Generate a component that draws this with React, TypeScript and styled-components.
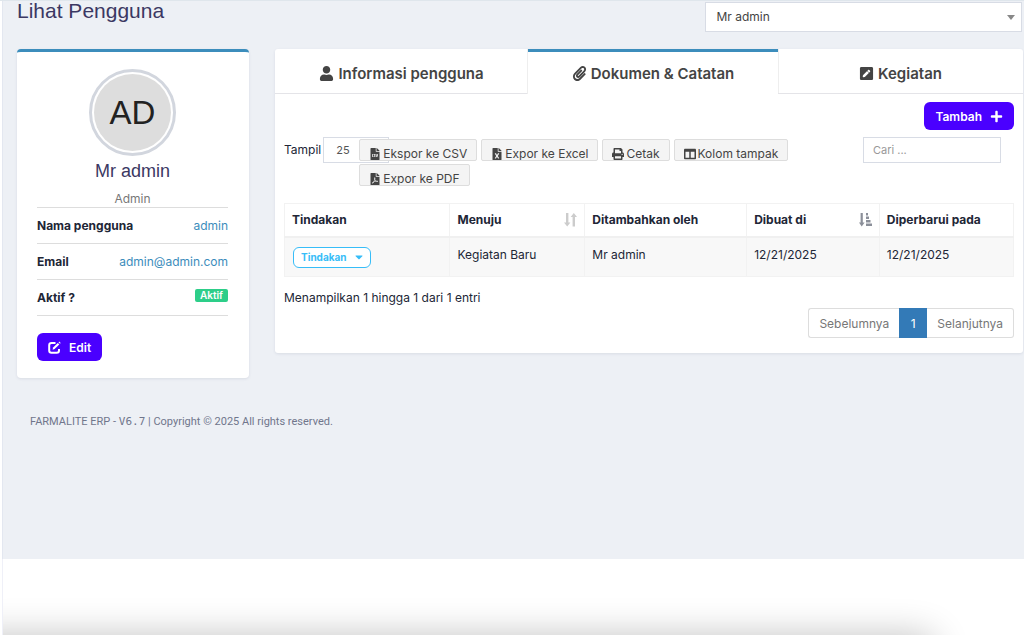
import React from "react";
import styled, { createGlobalStyle, css } from "styled-components";
import {
  FaUser,
  FaPaperclip,
  FaPenSquare,
  FaFileCsv,
  FaFileExcel,
  FaFilePdf,
  FaPrint,
  FaColumns,
  FaPlus,
  FaCaretDown,
} from "react-icons/fa";

const sans = `Inter, "Noto Sans", sans-serif`;
const heading = `"Liberation Sans", Arial, sans-serif`;

const GlobalStyle = createGlobalStyle`
  *, *::before, *::after { box-sizing: border-box; }
  body {
    margin: 0;
    background: #fff;
    color: #212636;
    font-family: ${sans};
    font-size: 12px;
    line-height: 18px;
  }
  button, input, select { font-family: inherit; }
`;

const Page = styled.div`
  display: flex;
  flex-direction: column;
  min-height: 100vh;
  padding-left: 2px;
  border-top: 1px solid #dfe6ec;
`;

const Content = styled.div`
  flex: 1;
  padding: 0 1px 0 13px;
  background: #edf0f5;
  border-left: 1px solid #e3e7f0;
`;

const Header = styled.header`
  display: flex;
  justify-content: space-between;
  align-items: flex-start;
  padding: 0 1px;
`;

const Title = styled.h1`
  margin: 0;
  color: #3b3863;
  font: 400 21px/20px ${heading};
`;

const UserPicker = styled.div`
  position: relative;
  width: 31.5%;
  margin-top: 1px;
`;

const UserSelect = styled.select`
  display: block;
  width: 100%;
  height: 30px;
  padding: 0 10px 2px;
  border: 1px solid #d8dce5;
  border-radius: 0;
  background: #fff;
  color: #444;
  font-size: 12px;
  appearance: none;
`;

const PickerArrow = styled.span`
  position: absolute;
  top: 13px;
  right: 7px;
  border: 4px solid transparent;
  border-top: 5px solid #888;
  border-bottom: 0;
  pointer-events: none;
`;

const Columns = styled.div`
  display: grid;
  grid-template-columns: minmax(0, 232fr) minmax(0, 748fr);
  gap: 26px;
  align-items: start;
  margin-top: 17px;
  padding-left: 1px;
`;

const ProfileCard = styled.section`
  padding: 17px 21px 17px 20px;
  border-top: 3px solid #3c8dbc;
  border-radius: 4px;
  background: #fff;
  box-shadow: 0 1px 3px rgba(40, 50, 90, 0.1);
  text-align: center;
`;

const Avatar = styled.div`
  width: 87px;
  height: 87px;
  margin: 0 auto;
  padding: 2px;
  border: 3px solid #d2d6de;
  border-radius: 50%;
  color: #222;
  font: 400 33px/77px ${heading};
`;

const AvatarInner = styled.span`
  display: block;
  border-radius: 50%;
  background: #ddd;
`;

const ProfileName = styled.h2`
  margin: 4px 0 0;
  color: #3b3863;
  font: 400 18px/22px ${heading};
`;

const ProfileRole = styled.p`
  margin: 8px 0 0;
  color: #777;
  line-height: 17px;
`;

const Facts = styled.dl`
  margin: 0;
  border-top: 1px solid #ddd;
`;

const Fact = styled.div`
  display: flex;
  justify-content: space-between;
  height: 36px;
  padding-top: 9px;
  border-bottom: 1px solid #ddd;
`;

const FactName = styled.dt`
  font-weight: 700;
`;

const FactValue = styled.dd`
  margin: 0;
`;

const FactLink = styled.a`
  color: #3c8dbc;
  text-decoration: none;
`;

const Badge = styled.span`
  display: block;
  padding: 0 5px;
  border-radius: 2px;
  background: #2dce89;
  color: #fff;
  font-size: 10px;
  font-weight: 600;
  line-height: 13px;
`;

const PrimaryButton = styled.button`
  display: flex;
  align-items: center;
  gap: 8px;
  height: 28px;
  padding: 0 11px;
  border: 0;
  border-radius: 6px;
  background: #4a00ff;
  color: #fff;
  font-size: 12px;
  font-weight: 600;
`;

const ProfileActions = styled.div`
  display: flex;
  padding-top: 17px;
`;

const Panel = styled.section`
  border-radius: 3px;
  background: #fff;
  box-shadow: 0 1px 3px rgba(40, 50, 90, 0.1);
`;

const Tabs = styled.div`
  display: grid;
  grid-template-columns: 253fr 250fr 245fr;
`;

const Tab = styled.button<{ $active?: boolean }>`
  display: flex;
  align-items: center;
  justify-content: center;
  gap: 4px;
  height: 45px;
  padding: 2px 0 0;
  border: 0;
  border-top: 3px solid transparent;
  border-bottom: 1px solid #e4e4e8;
  background: none;
  color: #444;
  font-size: 15px;
  font-weight: 600;
  ${(p) =>
    p.$active &&
    css`
      border-top-color: #3c8dbc;
      border-bottom-color: transparent;
      box-shadow: -1px 0 #eee, 1px 0 #eee;
    `}
`;

const PanelBody = styled.div`
  padding: 8px 9px 15px;
`;

const PanelActions = styled.div`
  display: flex;
  justify-content: flex-end;
`;

const Toolbar = styled.div`
  display: flex;
  align-items: flex-start;
  padding-top: 7px;
`;

const LengthLabel = styled.label`
  display: flex;
  flex: none;
  align-items: center;
  gap: 2px;
  height: 26px;
`;

const LengthSelect = styled.select`
  width: 66px;
  height: 26px;
  padding: 0 12px;
  border: 1px solid #d8dce5;
  border-radius: 0;
  background: #fff;
  color: #555;
  font-size: 11px;
  appearance: none;
`;

const ExportButtons = styled.div`
  position: relative;
  display: flex;
  flex: 1;
  flex-wrap: wrap;
  gap: 3px 4px;
  margin: 2px 0 0 -30px;
`;

const ExportButton = styled.button`
  display: flex;
  align-items: flex-start;
  gap: 2px;
  height: 22px;
  padding: 5px 9px 0;
  border: 1px solid #ddd;
  border-radius: 2px;
  background: #f4f4f4;
  color: #444;
  font-size: 12px;
  line-height: 18px;
  overflow: hidden;

  svg {
    flex: none;
    width: auto;
    height: 12px;
    margin-top: 3px;
  }
`;

const Search = styled.input`
  width: 138px;
  height: 26px;
  margin-right: 13px;
  padding: 0 9px;
  border: 1px solid #d8dce5;
  background: #fff;
  font-size: 11px;

  &::placeholder { color: #999; }
`;

const Table = styled.table`
  width: 100%;
  margin-top: 17px;
  border: 1px solid #f2f2f2;
  border-collapse: collapse;
  table-layout: fixed;
`;

const HeadCell = styled.th<{ $width: string }>`
  width: ${(p) => p.$width};
  height: 33px;
  padding: 0 7px;
  border: 1px solid #f2f2f2;
  border-bottom: 2px solid #f0f0f0;
  font-weight: 700;
  text-align: left;
`;

const HeadLabel = styled.span`
  display: flex;
  align-items: center;
  justify-content: space-between;
`;

const Cell = styled.td`
  height: 40px;
  padding: 8px 7px;
  border: 1px solid #f2f2f2;
  background: #f8f8f8;
  vertical-align: top;
`;

const RowAction = styled.button`
  display: flex;
  align-items: center;
  gap: 6px;
  height: 21px;
  margin: 1px 0 0 1px;
  padding: 0 5px 0 7px;
  border: 1px solid #37bdf8;
  border-radius: 6px;
  background: #fff;
  color: #37bdf8;
  font-size: 10px;
  font-weight: 700;
`;

const TableInfo = styled.p`
  margin: 12px 0 0;
`;

const Pagination = styled.nav`
  display: flex;
  justify-content: flex-end;
  margin-top: 1px;
`;

const PageButton = styled.button<{ $current?: boolean }>`
  height: 30px;
  padding: 0 10px;
  border: 1px solid #ddd;
  background: #fff;
  color: #777;
  font-size: 12px;

  &:first-child { border-right: 0; border-radius: 3px 0 0 3px; }
  &:last-child { border-left: 0; border-radius: 0 3px 3px 0; }
  ${(p) =>
    p.$current &&
    css`
      min-width: 28px;
      border-color: #337ab7;
      background: #337ab7;
      color: #fff;
    `}
`;

const Footer = styled.footer`
  padding: 35px 14px;
  color: #70768c;
  font-family: Roboto, sans-serif;
  font-size: 11px;
`;

const Version = styled.span`
  font-family: "DejaVu Sans Mono", monospace;
`;

const BottomStrip = styled.div`
  position: relative;
  height: 76px;
  border-left: 1px solid #eff0f8;
  overflow: hidden;

  &::after {
    content: "";
    position: absolute;
    top: 100%;
    left: -40px;
    right: 90px;
    height: 40px;
    border-radius: 12px;
    box-shadow: 0 0 36px rgba(0, 0, 0, 0.24);
  }
`;

const EditIcon = () => (
  <svg width="13" height="13" viewBox="0 0 13 13" fill="none" stroke="#fff" strokeWidth="2" aria-hidden="true">
    <path d="M7.500 2H3.600C2.200 2 1.200 3 1.200 4.200v5.200c0 1.300 1 2.300 2.300 2.300h5.200c1.300 0 2.300-1 2.300-2.300V8" />
    <path d="M4.600 8.800l.5-2.200 4.700-4.700 1.500 1.500-4.700 4.700z" fill="#fff" stroke="none" />
    <path d="M10.500 1.200l.7-.7 1.500 1.500-.7.7z" fill="#fff" stroke="none" />
  </svg>
);

const SortBoth = () => (
  <svg width="13" height="14" viewBox="0 0 13 14" fill="#ccc" aria-hidden="true">
    <path d="M2 0h2.400v9.500h2L3.200 13.500 0 9.500h2z" />
    <path d="M8.600 13.500H11V4h2L9.800 0 6.700 4h1.900z" />
  </svg>
);

const SortDown = () => (
  <svg width="13" height="14" viewBox="0 0 13 14" fill="#8b8f99" aria-hidden="true">
    <path d="M1.600 0h2.200v9.500h1.800L2.700 13.500 0 9.500h1.600z" />
    <path d="M7 0h2v2.500H7zM7 3.500h3v2.500H7zM7 7h4.500v2.500H7zM7 10.500h6V13H7z" />
  </svg>
);

const exportActions = [
  { label: "Ekspor ke CSV", Icon: FaFileCsv },
  { label: "Expor ke Excel", Icon: FaFileExcel },
  { label: "Cetak", Icon: FaPrint },
  { label: "Kolom tampak", Icon: FaColumns },
  { label: "Expor ke PDF", Icon: FaFilePdf },
];

const columns = [
  { label: "Tindakan", width: "22.7%" },
  { label: "Menuju", width: "18.5%", sort: <SortBoth /> },
  { label: "Ditambahkan oleh", width: "22.2%" },
  { label: "Dibuat di", width: "18.2%", sort: <SortDown /> },
  { label: "Diperbarui pada", width: "18.4%" },
];

export default function App() {
  return (
    <>
      <GlobalStyle />
      <Page>
        <Content>
          <Header>
            <Title>Lihat Pengguna</Title>
            <UserPicker>
              <UserSelect aria-label="Pengguna">
                <option>Mr admin</option>
              </UserSelect>
              <PickerArrow />
            </UserPicker>
          </Header>
          <Columns>
            <ProfileCard>
              <Avatar>
                <AvatarInner>AD</AvatarInner>
              </Avatar>
              <ProfileName>Mr admin</ProfileName>
              <ProfileRole>Admin</ProfileRole>
              <Facts>
                <Fact>
                  <FactName>Nama pengguna</FactName>
                  <FactValue><FactLink href="#user">admin</FactLink></FactValue>
                </Fact>
                <Fact>
                  <FactName>Email</FactName>
                  <FactValue><FactLink href="mailto:admin@admin.com">admin@admin.com</FactLink></FactValue>
                </Fact>
                <Fact>
                  <FactName>Aktif ?</FactName>
                  <FactValue><Badge>Aktif</Badge></FactValue>
                </Fact>
              </Facts>
              <ProfileActions>
                <PrimaryButton type="button"><EditIcon />Edit</PrimaryButton>
              </ProfileActions>
            </ProfileCard>
            <Panel>
              <Tabs role="tablist">
                <Tab type="button" role="tab"><FaUser />Informasi pengguna</Tab>
                <Tab type="button" role="tab" aria-selected="true" $active><FaPaperclip />Dokumen &amp; Catatan</Tab>
                <Tab type="button" role="tab"><FaPenSquare />Kegiatan</Tab>
              </Tabs>
              <PanelBody>
                <PanelActions>
                  <PrimaryButton type="button">Tambah<FaPlus size={13} /></PrimaryButton>
                </PanelActions>
                <Toolbar>
                  <LengthLabel>
                    Tampil
                    <LengthSelect><option>25</option></LengthSelect>
                  </LengthLabel>
                  <ExportButtons>
                    {exportActions.map(({ label, Icon }) => (
                      <ExportButton type="button" key={label}><Icon />{label}</ExportButton>
                    ))}
                  </ExportButtons>
                  <Search type="search" placeholder="Cari ..." aria-label="Cari" />
                </Toolbar>
                <Table>
                  <thead>
                    <tr>
                      {columns.map((c) => (
                        <HeadCell key={c.label} $width={c.width}>
                          <HeadLabel>{c.label}{c.sort}</HeadLabel>
                        </HeadCell>
                      ))}
                    </tr>
                  </thead>
                  <tbody>
                    <tr>
                      <Cell><RowAction type="button">Tindakan<FaCaretDown size={12} /></RowAction></Cell>
                      <Cell>Kegiatan Baru</Cell>
                      <Cell>Mr admin</Cell>
                      <Cell>12/21/2025</Cell>
                      <Cell>12/21/2025</Cell>
                    </tr>
                  </tbody>
                </Table>
                <TableInfo>Menampilkan 1 hingga 1 dari 1 entri</TableInfo>
                <Pagination aria-label="Halaman">
                  <PageButton type="button">Sebelumnya</PageButton>
                  <PageButton type="button" $current>1</PageButton>
                  <PageButton type="button">Selanjutnya</PageButton>
                </Pagination>
              </PanelBody>
            </Panel>
          </Columns>
          <Footer>
            FARMALITE ERP - <Version>V6.7</Version> | Copyright © 2025 All rights reserved.
          </Footer>
        </Content>
        <BottomStrip />
      </Page>
    </>
  );
}
